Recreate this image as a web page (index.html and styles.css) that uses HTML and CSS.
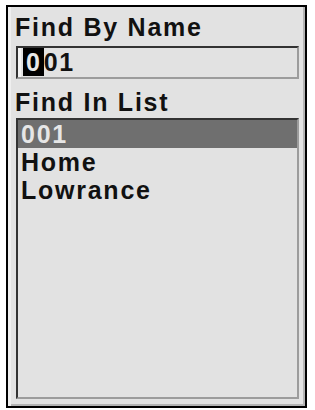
FILE: index.html
```html
<!DOCTYPE html>
<html lang="en">
<head>
    <meta charset="UTF-8">
    <meta name="viewport" content="width=device-width, initial-scale=1.0">
    <title>Find Waypoint</title>
    <link rel="stylesheet" href="styles.css">
</head>
<body>
    <div class="frame">
        <div class="label">Find By Name</div>
        <div class="name-input"><span class="cursor">0</span>01</div>

        <div class="label list-label">Find In List</div>
        <div class="list">
            <div class="row selected">001</div>
            <div class="row">Home</div>
            <div class="row">Lowrance</div>
        </div>
    </div>
</body>
</html>
```

FILE: styles.css
```css
body {
    margin: 0;
    background: #fff;
    font-family: "Liberation Sans", Arial, sans-serif;
    font-weight: bold;
    font-size: 25px;
    letter-spacing: 1.75px;
    color: #111;
}
.frame {
    box-sizing: border-box;
    width: 301px;
    height: 403px;
    margin: 5px 0 0 6px;
    border: 2px solid #000;
    background: #e2e2e2;
    box-shadow: inset 3px 0 0 #efefef, inset -2px -2px 0 #b4b4b4;
    padding: 6px 6px 7px 8px;
    display: flex;
    flex-direction: column;
}
.label {
    line-height: 28px;
    margin-left: -1px;
    margin-bottom: 5px;
}
.list-label {
    margin-top: 9px;
    margin-bottom: 2px;
}
.name-input {
    height: 33px;
    box-sizing: border-box;
    border-top: 2px solid #333;
    border-left: 2px solid #333;
    border-right: 2px solid #9c9c9c;
    border-bottom: 2px solid #9c9c9c;
    box-shadow: inset 3px 0 0 #f4f4f4;
    padding-left: 5px;
    line-height: 29px;
}
.cursor {
    background: #000;
    color: #e8e8e8;
    padding: 0 2px 0 3px;
}
.list {
    flex: 1;
    border-top: 2px solid #333;
    border-left: 2px solid #333;
    border-right: 2px solid #9c9c9c;
    border-bottom: 2px solid #9c9c9c;
}
.row {
    line-height: 28px;
    padding-left: 3px;
}
.selected {
    background: #6f6f6f;
    color: #e6e6e6;
}
```
